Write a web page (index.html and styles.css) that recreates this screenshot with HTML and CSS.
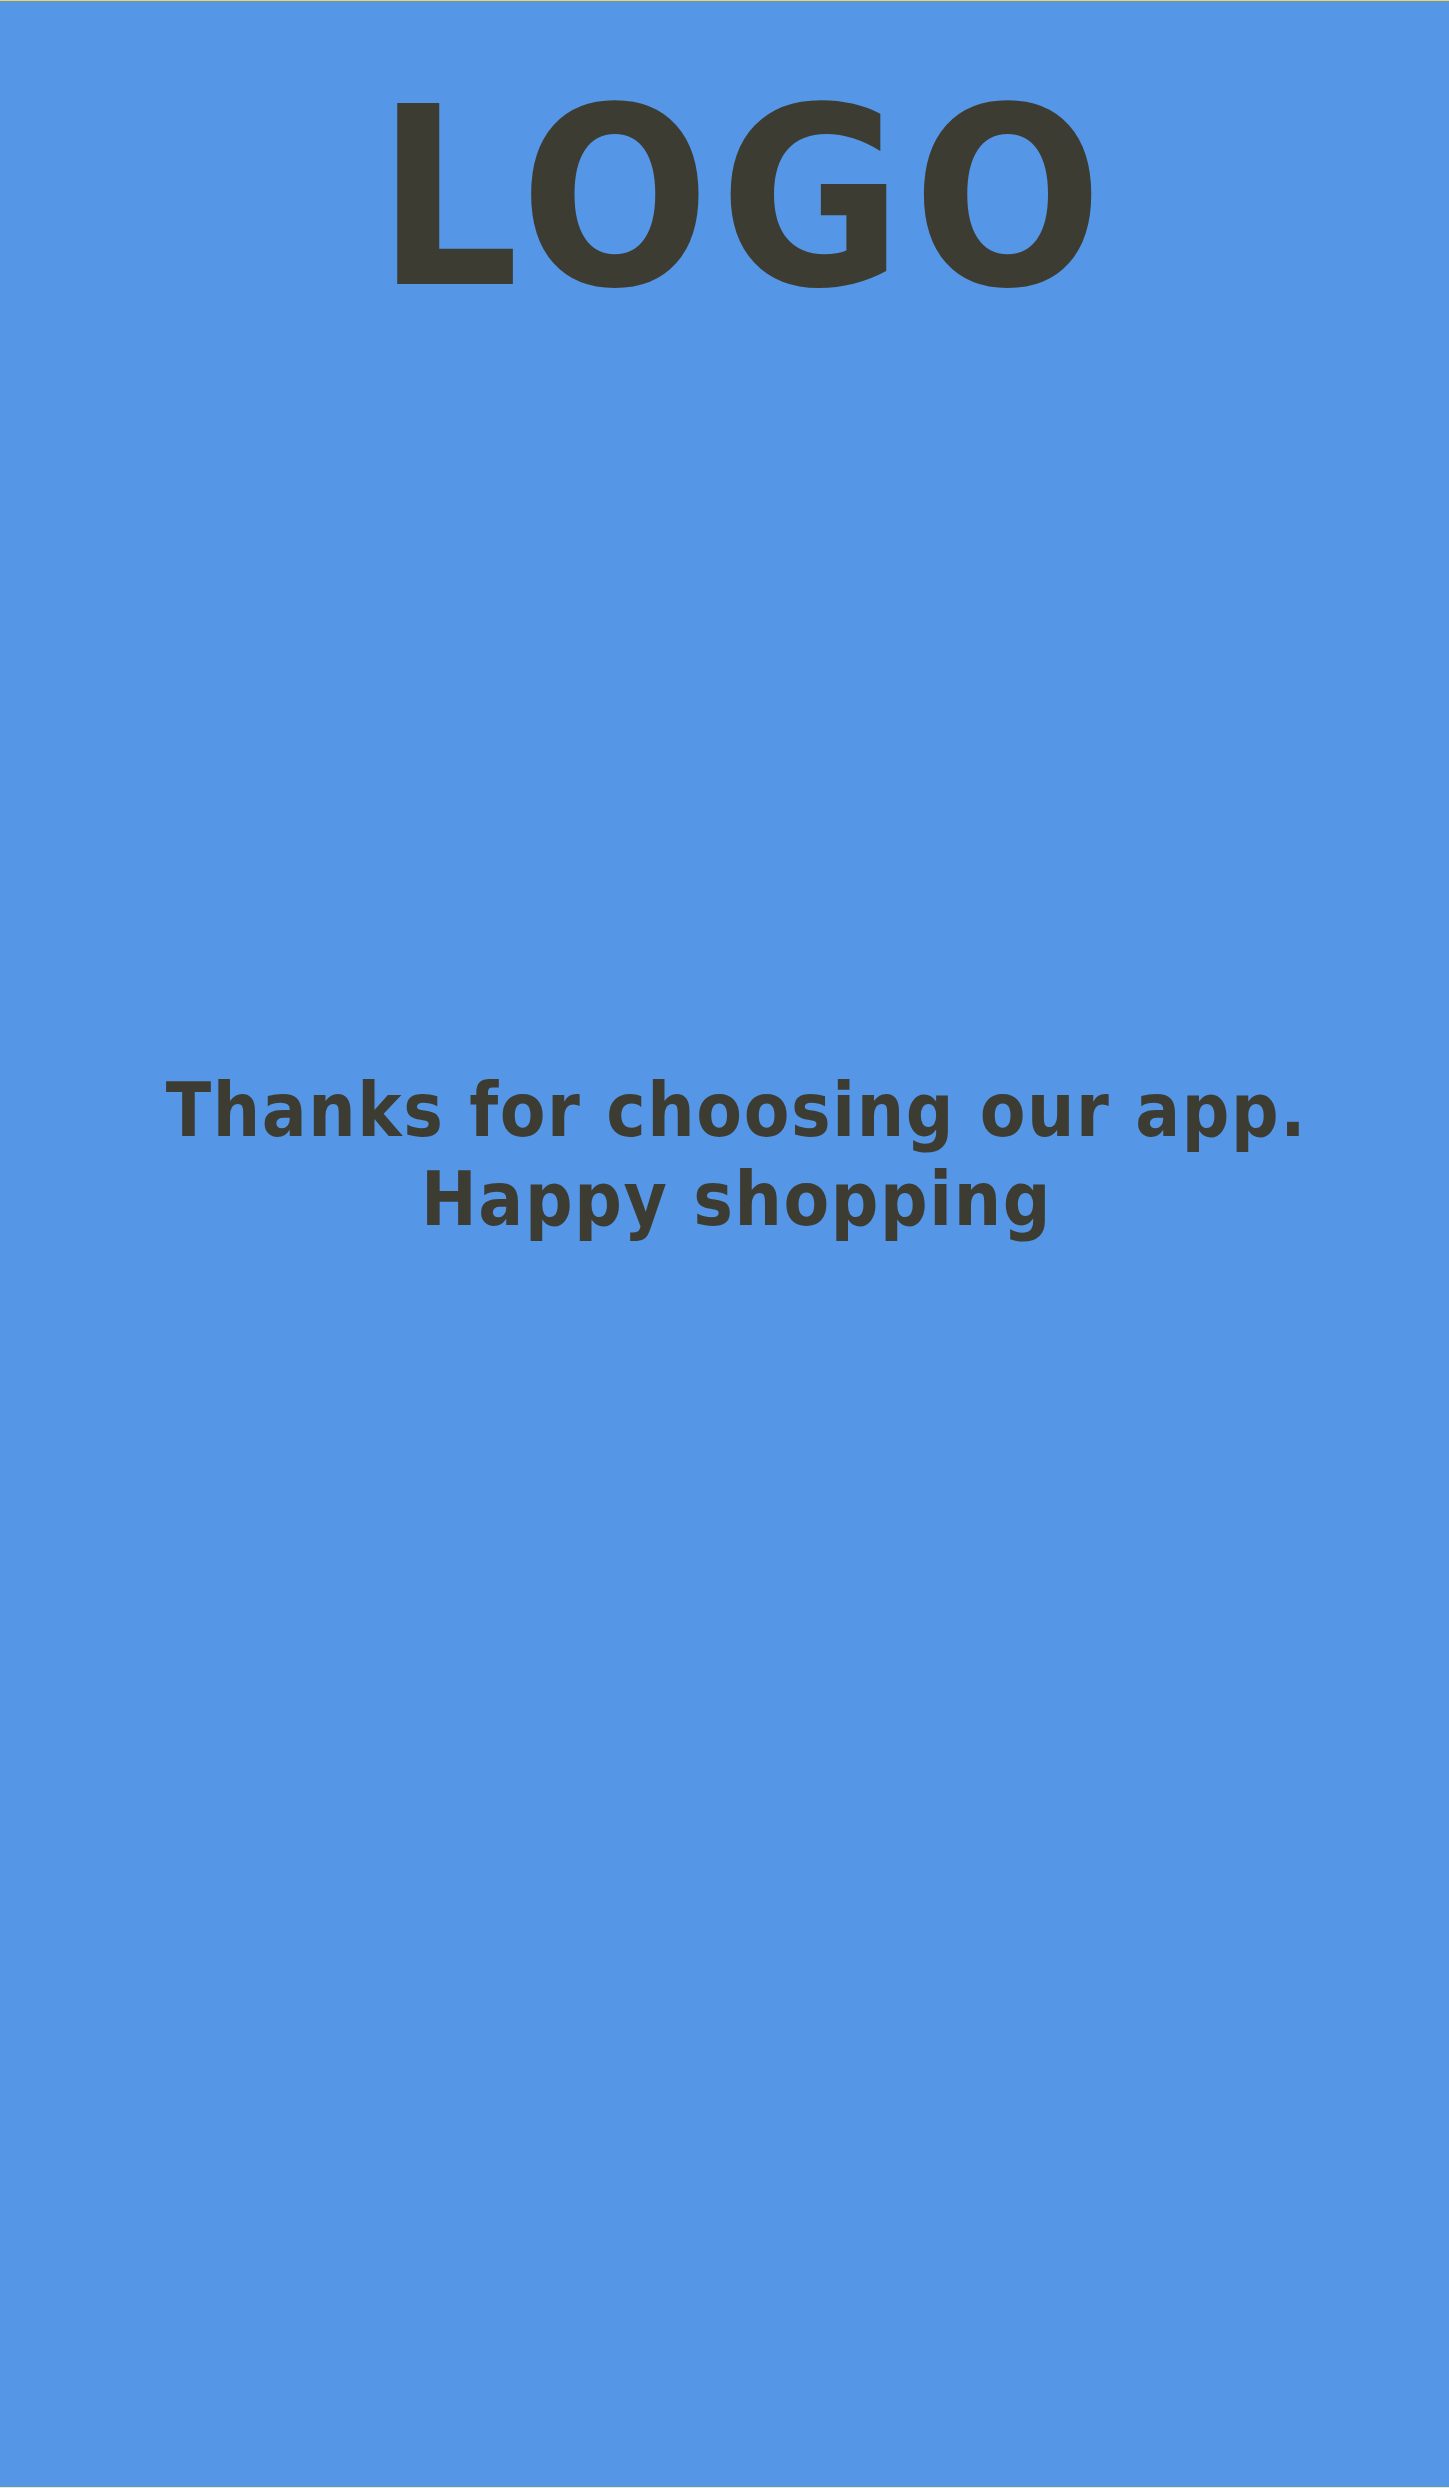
FILE: index.html
```html
<!DOCTYPE html>
<html>
<head>
<meta charset="utf-8">
<link rel="stylesheet" href="styles.css">
</head>
<body>
<div class="screen">
  <header class="logo-wrap"><h1 class="logo">LOGO</h1></header>
  <main class="message">
    <p>Thanks for choosing our app.<br>Happy shopping</p>
  </main>
</div>
</body>
</html>
```
FILE: styles.css
```css
html, body { margin: 0; padding: 0; }
body { background: #5597e6; }
.screen {
  box-sizing: border-box;
  height: 2488px;
  background: #5597e6;
  border-top: 1px solid #f3d548;
  border-bottom: 1px solid #eee9ad;
  display: flex;
  flex-direction: column;
  align-items: center;
  font-family: "DejaVu Sans Condensed", "DejaVu Sans", sans-serif;
  font-stretch: condensed;
  font-weight: bold;
  color: #3d3c33;
}
.logo-wrap { padding-top: 73px; padding-left: 40px; }
.logo {
  margin: 0;
  font-size: 248px;
  line-height: 1;
  font-weight: bold;
  letter-spacing: 10px;
}
.message { margin-top: 744px; padding-left: 24px; }
.message p {
  margin: 0;
  font-size: 74px;
  line-height: 89px;
  text-align: center;
  letter-spacing: 1.6px;
}
```
